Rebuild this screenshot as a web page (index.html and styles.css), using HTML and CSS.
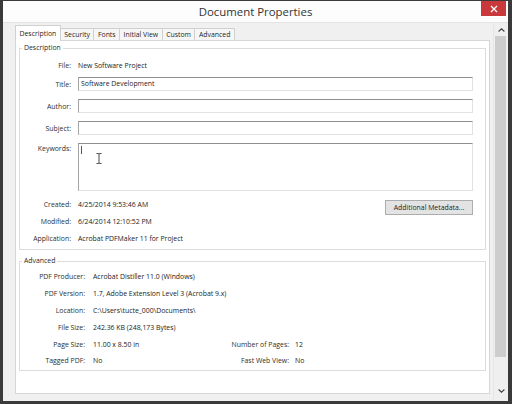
FILE: index.html
```html
<!DOCTYPE html>
<html lang="en">
<head>
    <meta charset="UTF-8">
    <title>Document Properties</title>
    <link rel="stylesheet" href="styles.css">
</head>
<body>
    <div class="window">
        <div class="titlebar">
            <span class="title">Document Properties</span>
            <button class="close" title="Close">
                <svg width="8" height="8" viewBox="0 0 8 8"><path d="M1 1 L7 7 M7 1 L1 7" stroke="#fff" stroke-width="1.3"/></svg>
            </button>
        </div>
        <div class="body">
            <div class="content">
                <div class="tabs">
                    <div class="tab active">Description</div>
                    <div class="tab">Security</div>
                    <div class="tab">Fonts</div>
                    <div class="tab">Initial View</div>
                    <div class="tab">Custom</div>
                    <div class="tab">Advanced</div>
                </div>
                <div class="panel">
                    <fieldset class="group desc">
                        <legend>Description</legend>
                        <div class="row r-file">
                            <span class="label">File:</span>
                            <span class="value">New Software Project</span>
                        </div>
                        <div class="row r-field">
                            <span class="label">Title:</span>
                            <div class="field">Software Development</div>
                        </div>
                        <div class="row r-field">
                            <span class="label">Author:</span>
                            <div class="field"></div>
                        </div>
                        <div class="row r-field">
                            <span class="label">Subject:</span>
                            <div class="field"></div>
                        </div>
                        <div class="row r-field r-keywords">
                            <span class="label">Keywords:</span>
                            <div class="field tall">
                                <span class="caret"></span>
                                <svg class="ibeam" width="6" height="11" viewBox="0 0 6 11"><path d="M0.5 0.5 H2.3 Q3 0.5 3 1.3 V9.7 Q3 10.5 2.3 10.5 H0.5 M5.5 0.5 H3.7 Q3 0.5 3 1.3 M3 9.7 Q3 10.5 3.7 10.5 H5.5" fill="none" stroke="#333" stroke-width="0.9"/></svg>
                            </div>
                        </div>
                        <div class="row r-created">
                            <span class="label">Created:</span>
                            <span class="value">4/25/2014 9:53:46 AM</span>
                            <button class="metadata">Additional Metadata...</button>
                        </div>
                        <div class="row r-info">
                            <span class="label">Modified:</span>
                            <span class="value">6/24/2014 12:10:52 PM</span>
                        </div>
                        <div class="row r-info">
                            <span class="label">Application:</span>
                            <span class="value">Acrobat PDFMaker 11 for Project</span>
                        </div>
                    </fieldset>

                    <fieldset class="group adv">
                        <legend>Advanced</legend>
                        <div class="arow">
                            <span class="k">PDF Producer:</span>
                            <span class="v">Acrobat Distiller 11.0 (Windows)</span>
                        </div>
                        <div class="arow">
                            <span class="k">PDF Version:</span>
                            <span class="v">1.7, Adobe Extension Level 3 (Acrobat 9.x)</span>
                        </div>
                        <div class="arow">
                            <span class="k">Location:</span>
                            <span class="v">C:\Users\tucte_000\Documents\</span>
                        </div>
                        <div class="arow">
                            <span class="k">File Size:</span>
                            <span class="v">242.36 KB (248,173 Bytes)</span>
                        </div>
                        <div class="arow">
                            <span class="k">Page Size:</span>
                            <span class="v short">11.00 x 8.50 in</span>
                            <span class="k2">Number of Pages:</span>
                            <span class="v">12</span>
                        </div>
                        <div class="arow">
                            <span class="k">Tagged PDF:</span>
                            <span class="v short">No</span>
                            <span class="k2">Fast Web View:</span>
                            <span class="v">No</span>
                        </div>
                    </fieldset>
                </div>
            </div>
            <div class="scrollbar">
                <div class="arrow">
                    <svg width="7" height="4" viewBox="0 0 7 4"><path d="M0.6 3.5 L3.5 0.8 L6.4 3.5" fill="none" stroke="#444" stroke-width="1.1"/></svg>
                </div>
                <div class="thumb"></div>
                <div class="track"></div>
                <div class="arrow down">
                    <svg width="7" height="4" viewBox="0 0 7 4"><path d="M0.6 0.5 L3.5 3.2 L6.4 0.5" fill="none" stroke="#444" stroke-width="1.1"/></svg>
                </div>
            </div>
        </div>
    </div>
</body>
</html>
```

FILE: styles.css
```css
html, body {
    margin: 0;
    padding: 0;
}
body {
    width: 512px;
    height: 404px;
    overflow: hidden;
    font-family: "Segoe UI", "Open Sans", sans-serif;
    font-size: 6.9px;
    color: #222;
}
.window {
    height: 404px;
    box-sizing: border-box;
    border: solid #3a3a3a;
    border-width: 1px 4px 3px 3px;
    display: flex;
    flex-direction: column;
    background: #f0f0f0;
}

/* title bar */
.titlebar {
    height: 22px;
    box-sizing: border-box;
    background: #fdfdfd;
    border-bottom: 1px solid #e4e4e4;
    display: grid;
    grid-template-columns: 1fr auto 1fr;
}
.title {
    grid-column: 2;
    align-self: center;
    font-size: 11.4px;
    color: #333;
    padding-bottom: 1px;
}
.close {
    grid-column: 3;
    justify-self: end;
    align-self: start;
    width: 25px;
    height: 15px;
    margin-right: 2px;
    border: none;
    padding: 0;
    background: #c9383b;
    display: flex;
    align-items: center;
    justify-content: center;
}

/* body */
.body {
    flex: 1;
    display: flex;
}
.content {
    flex: 1;
    padding: 2px 3px 7px 12px;
    display: flex;
    flex-direction: column;
}
.tabs {
    display: flex;
    align-items: flex-end;
    height: 15px;
}
.tab {
    height: 12px;
    box-sizing: border-box;
    padding: 0 3.5px;
    border: 1px solid #d0d0d0;
    border-bottom: none;
    margin-left: -1px;
    background: #f6f6f6;
    line-height: 11px;
    color: #1e1e1e;
}
.tab.active {
    height: 16px;
    margin-left: 0;
    margin-bottom: -1px;
    padding: 2px 3.5px 0;
    background: #fff;
    position: relative;
    z-index: 1;
}
.panel {
    flex: 1;
    background: #fff;
    border: 1px solid #d6d6d6;
    padding: 1px 3px 0 3px;
}

/* groups */
.group {
    margin: 0;
    padding: 0 12px 4px 0;
    border: 1px solid #dcdcdc;
}
.group legend {
    padding: 0 2px;
    margin-left: 2px;
    line-height: 12px;
    color: #2a2a2a;
}
.row {
    display: flex;
    align-items: center;
    height: 14px;
}
.label {
    width: 51px;
    margin-right: 7px;
    flex: none;
    text-align: right;
    color: #2e2e2e;
}
.r-file {
    margin-top: 4px;
}
.r-field {
    margin-top: 8px;
}
.r-file + .r-field {
    margin-top: 5px;
}
.field {
    flex: 1;
    height: 14px;
    box-sizing: border-box;
    background: #fff;
    border: 1px solid;
    border-color: #8e8e8e #e2e2e2 #e2e2e2 #a4a4a4;
    padding: 0 2px;
    line-height: 12px;
    color: #1e1e1e;
}
.r-keywords {
    height: 48px;
    align-items: flex-start;
}
.r-keywords .label {
    line-height: 12px;
}
.field.tall {
    height: 48px;
    position: relative;
}
.caret {
    display: block;
    width: 0;
    height: 8px;
    margin-top: 2px;
    border-left: 1px solid #555;
}
.ibeam {
    position: absolute;
    left: 17px;
    top: 9px;
}
.r-created {
    margin-top: 6px;
}
.r-info {
    margin-top: 3px;
}
.metadata {
    margin-left: auto;
    align-self: flex-start;
    margin-top: 3px;
    width: 88px;
    height: 15px;
    flex: none;
    padding: 0;
    border: 1px solid #adadad;
    background: #e3e3e3;
    font-family: inherit;
    font-size: 6.9px;
    color: #1e1e1e;
}

/* advanced */
.group.adv {
    margin-top: 5px;
    padding: 1.6px 12px 0.6px 0;
}
.arow {
    display: flex;
    align-items: center;
    height: 16.8px;
}
.k {
    width: 65px;
    margin-right: 8px;
    flex: none;
    text-align: right;
    color: #2e2e2e;
}
.v.short {
    width: 126px;
    flex: none;
}
.k2 {
    width: 70px;
    margin-right: 6px;
    flex: none;
    text-align: right;
    color: #2e2e2e;
}

/* scrollbar */
.scrollbar {
    width: 15px;
    display: flex;
    flex-direction: column;
    background: #efefef;
    border-left: 1px solid #e6e6e6;
    box-sizing: border-box;
}
.arrow {
    height: 13px;
    display: flex;
    align-items: center;
    justify-content: center;
}
.arrow.down {
    height: 14px;
    margin-bottom: 3px;
}
.thumb {
    height: 321px;
    width: 11px;
    margin-left: 1px;
    background: #cdcdcd;
}
.track {
    flex: 1;
}
```
